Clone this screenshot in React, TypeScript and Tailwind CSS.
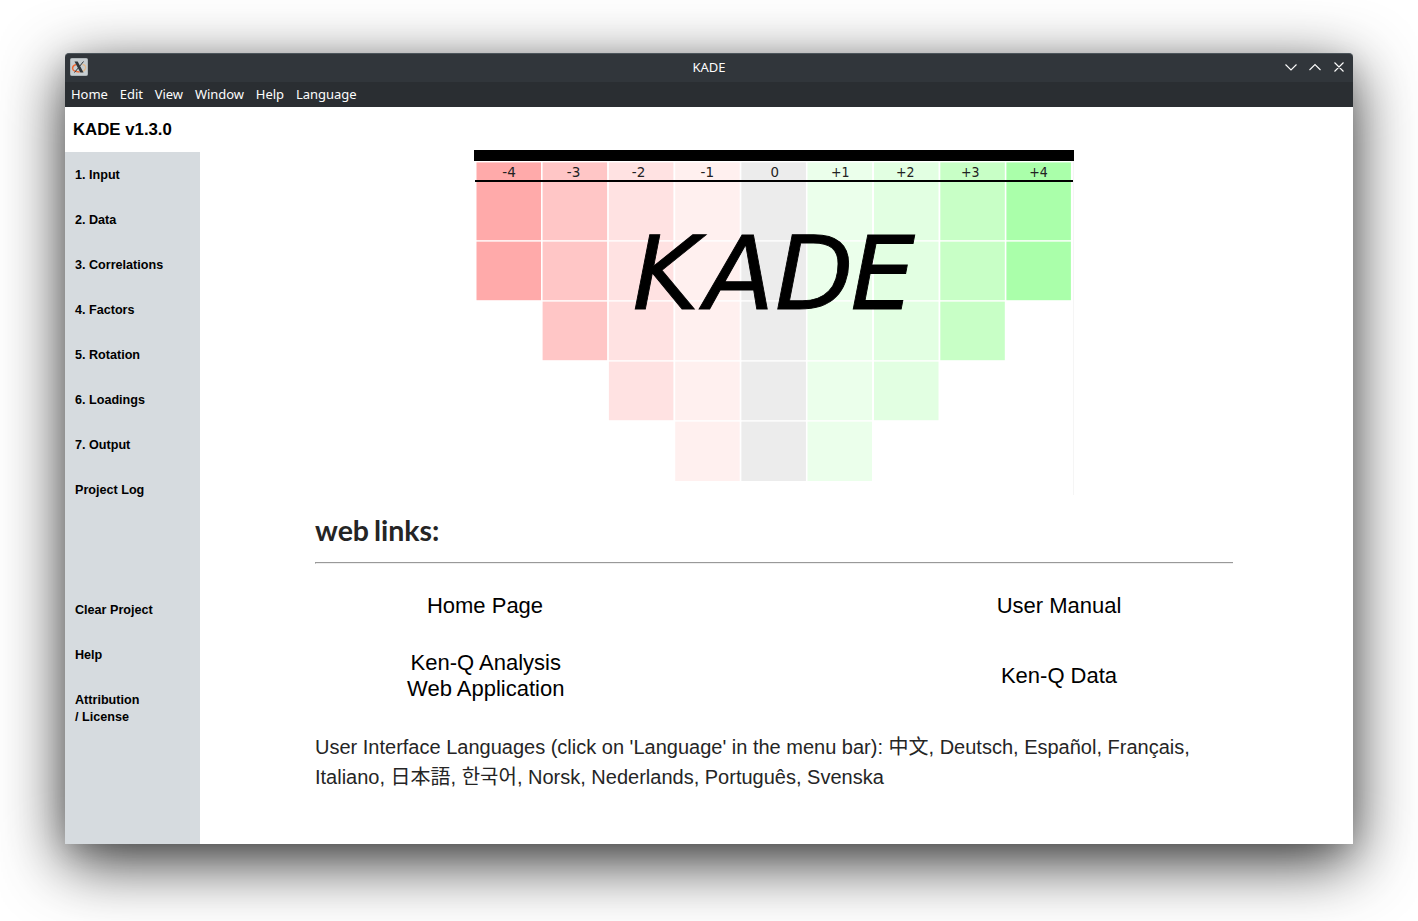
import React from "react";

const menu = ["Home", "Edit", "View", "Window", "Help", "Language"];

const steps = ["1. Input", "2. Data", "3. Correlations", "4. Factors", "5. Rotation", "6. Loadings", "7. Output", "Project Log"];

const columns = [
  { label: "-4", x: 2.5, cx: 35, rows: 2, fill: "#ffaaaa" },
  { label: "-3", x: 68.6, cx: 99.5, rows: 3, fill: "#ffc6c6" },
  { label: "-2", x: 134.9, cx: 164.5, rows: 4, fill: "#ffe2e2" },
  { label: "-1", x: 201.2, cx: 233.3, rows: 5, fill: "#fff0ef" },
  { label: "0", x: 267.4, cx: 300.8, rows: 5, fill: "#ececec" },
  { label: "+1", x: 333.5, cx: 366.3, rows: 5, fill: "#ebffeb" },
  { label: "+2", x: 400, cx: 431.3, rows: 4, fill: "#e2ffe2" },
  { label: "+3", x: 466.3, cx: 496.3, rows: 3, fill: "#c8ffc6" },
  { label: "+4", x: 532.4, cx: 564.5, rows: 2, fill: "#aaffaa" },
];

function rowHeight(i: number) {
  if (i === 0) return 59.2;
  return i === 4 ? 59.4 : 58.6;
}

function Logo() {
  return (
    <svg width="600" height="345" viewBox="0 0 600 345" className="block">
      <rect width="600" height="11" fill="#000" />
      {columns.map((c) => (
        <g key={c.label} fill={c.fill}>
          <rect x={c.x} y="12.4" width="64.5" height="18" />
          {Array.from({ length: c.rows }, (_, i) => (
            <rect key={i} x={c.x} y={i === 0 ? 31 : 31.6 + i * 60} width="64.5" height={rowHeight(i)} />
          ))}
          <text x={c.cx} y="27.4" textAnchor="middle" fill="#222" fontSize="14" fontFamily="DejaVu Sans Condensed, DejaVu Sans, sans-serif" textLength={c.label === "0" ? 8.5 : c.label.startsWith("+") ? 18.5 : 13.5} lengthAdjust="spacingAndGlyphs">
            {c.label}
          </text>
        </g>
      ))}
      <rect x="1" y="30" width="598" height="2" fill="#000" />
      <rect x="599" y="11" width="1" height="334" fill="#f5f5f5" />
      <text x="158.500 230.500 301 376.500" y="159.300" fontSize="102" fontStyle="oblique" fontFamily="DejaVu Sans, sans-serif" stroke="#000" strokeWidth="0.9">
        KADE
      </text>
    </svg>
  );
}

function XIcon() {
  return (
    <svg width="18" height="18" viewBox="0 0 18 18" className="mb-[2px]">
      <rect x=".5" y=".5" width="17" height="17" rx="1" fill="#c8ced1" stroke="#aeb5b8" />
      <path d="M6.500 6.500C4 7.200 2.400 8.600 2.600 10.500c.3 2.200 3.400 3.400 7 3.400" fill="none" stroke="#ef6a35" strokeWidth="1.500" />
      <path d="M12.500 6.500c2.600.3 3.600 2 3 4-.6 1.700-2.200 2.900-4.400 3.400" fill="none" stroke="#e4b98c" strokeWidth="1.300" />
      <path d="M4.500 3.500h3.200l5.800 11h-3.200z" fill="#30363a" />
      <path d="M13.500 3.500 4.500 14.500" stroke="#30363a" strokeWidth="1" />
    </svg>
  );
}

export default function App() {
  return (
    <div className="h-[921px] w-[1418px] overflow-hidden bg-white px-[65px] pt-[53px]">
      <div className="flex h-[791px] w-[1288px] flex-col rounded-t-[4px] bg-white shadow-[0_18px_64px_rgba(0,0,0,0.8),0_8px_24px_rgba(0,0,0,0.1)]">
        <div className="grid h-[29px] grid-cols-3 items-center rounded-t-[4px] border-t border-[#4c555b] bg-[#31363b] pr-2 pl-[5px] font-['Noto_Sans',sans-serif] text-[13px] text-[#fcfcfc]">
          <XIcon />
          <span className="pb-[2px] pl-[3px] text-center leading-none">KADE</span>
          <svg width="60" height="12" viewBox="0 0 60 12" fill="none" stroke="#fcfcfc" strokeWidth="1.1" className="mb-[2px] justify-self-end">
            <path d="M.5 3.500 6 9l5.500-5.500M24.500 9 30 3.500 35.500 9M49.500 1.500l9 9M58.500 1.500l-9 9" />
          </svg>
        </div>
        <nav className="flex h-[25px] items-center gap-[11.8px] bg-[#2a2e32] px-[6px] font-['Noto_Sans',sans-serif] text-[13px] tracking-[-0.02px] text-[#fcfcfc]">
          {menu.map((m) => (
            <span key={m}>{m}</span>
          ))}
        </nav>
        <div className="flex min-h-0 flex-1 font-['Liberation_Sans',Arial,sans-serif]">
          <aside className="flex w-[135px] flex-col">
            <div className="flex h-[45px] items-center pl-2 text-[16.8px] font-bold text-black">KADE v1.3.0</div>
            <div className="flex flex-1 flex-col bg-[#d6dbdf] pt-px text-[12.6px] leading-[17px] font-bold text-black">
              {steps.map((s) => (
                <div key={s} className="flex h-[45px] items-center pl-[10px]">{s}</div>
              ))}
              <div className="mt-[75px] flex h-[45px] items-center pl-[10px]">Clear Project</div>
              <div className="flex h-[45px] items-center pl-[10px]">Help</div>
              <div className="pt-[14px] pl-[10px]">
                Attribution
                <br />/ License
              </div>
            </div>
          </aside>
          <main className="flex flex-1 flex-col pt-[43px] pr-[120px] pl-[115px]">
            <div className="flex justify-center">
              <Logo />
            </div>
            <h1 className="mt-[17px] h-[37px] font-['Lato',sans-serif] text-[28.5px] leading-[36px] font-bold [word-spacing:-2px] text-[#252525]">web links:</h1>
            <hr className="mt-[13px] h-[2px] border-t border-b border-l border-t-[#999] border-b-[#eee] border-l-[#999]" />
            <div className="mt-[27px] flex justify-between text-center text-[22px] leading-[26px] text-black">
              <div className="w-[340px]">
                <div className="h-[59px] pt-[2px]">Home Page</div>
                <div className="pl-[1.500px]">
                  Ken-Q Analysis
                  <br />
                  Web Application
                </div>
              </div>
              <div className="w-[348px]">
                <div className="h-[59px] pt-[2px]">User Manual</div>
                <div className="pt-[13px]">Ken-Q Data</div>
              </div>
            </div>
            <p className="mt-[30px] text-[20px] leading-[30px] whitespace-nowrap text-[#252525]">
              <span className="font-['Liberation_Sans','Noto_Sans_CJK_SC',sans-serif]">User Interface Languages (click on 'Language' in the menu bar): 中文, Deutsch, Español, Français,</span>
              <br />
              <span className="font-['Liberation_Sans','Noto_Sans_CJK_JP','Noto_Sans_CJK_KR',sans-serif]">Italiano, 日本語, 한국어, Norsk, Nederlands, Português, Svenska</span>
            </p>
          </main>
        </div>
      </div>
    </div>
  );
}
